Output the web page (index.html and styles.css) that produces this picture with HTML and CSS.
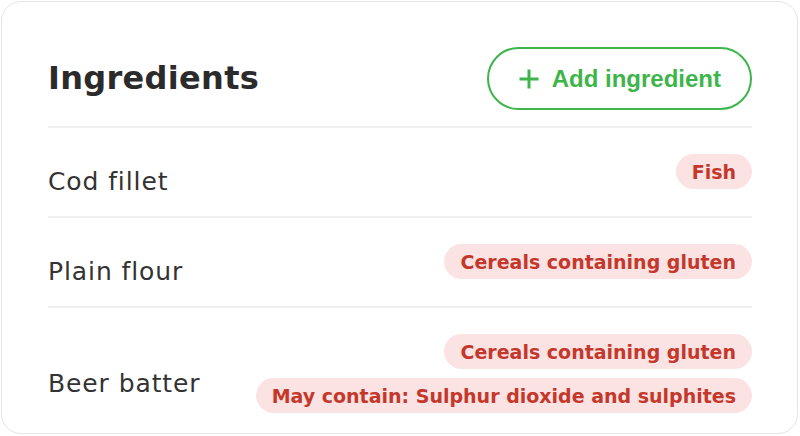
FILE: index.html
```html
<!DOCTYPE html>
<html lang="en">
<head>
<meta charset="utf-8">
<title>Ingredients</title>
<link rel="stylesheet" href="styles.css">
</head>
<body>
<section class="card">
  <header class="card-header">
    <h1 class="title">Ingredients</h1>
    <button class="add-btn" type="button">
      <svg class="plus" width="20" height="20" viewBox="0 0 20 20" aria-hidden="true">
        <path d="M10 0.5V19.5M0.5 10H19.5" stroke="currentColor" stroke-width="3" fill="none"/>
      </svg>
      <span>Add ingredient</span>
    </button>
  </header>
  <ul class="list">
    <li class="row">
      <span class="name">Cod fillet</span>
      <div class="tags"><span class="tag">Fish</span></div>
    </li>
    <li class="row">
      <span class="name">Plain flour</span>
      <div class="tags"><span class="tag">Cereals containing gluten</span></div>
    </li>
    <li class="row row-last">
      <span class="name">Beer batter</span>
      <div class="tags">
        <span class="tag">Cereals containing gluten</span>
        <span class="tag">May contain: Sulphur dioxide and sulphites</span>
      </div>
    </li>
  </ul>
</section>
</body>
</html>
```

FILE: styles.css
```css
html, body {
  margin: 0;
  padding: 0;
  background: #ffffff;
}

body {
  font-family: "DejaVu Sans", "Liberation Sans", sans-serif;
  color: #333333;
}

.card {
  margin: 1px 2px 1px 1px;
  border: 1px solid #e4e4e4;
  border-radius: 20px;
  background: #ffffff;
  padding: 0 45px 0 46px;
}

.card-header {
  display: flex;
  align-items: center;
  justify-content: space-between;
  padding: 45px 0 16px;
  border-bottom: 2px solid #efefef;
}

.title {
  margin: 0;
  font-family: "DejaVu Sans", sans-serif;
  font-weight: 700;
  font-size: 32px;
  letter-spacing: 0.3px;
  color: #2b2b2b;
  line-height: 1.2;
}

.add-btn {
  display: inline-flex;
  align-items: center;
  gap: 13px;
  height: 63px;
  box-sizing: border-box;
  padding: 0 29px 0 30px;
  border: 2px solid #3db54b;
  border-radius: 32px;
  background: #ffffff;
  color: #3db54b;
  font-family: "Liberation Sans", Arial, sans-serif;
  font-weight: 700;
  font-size: 24px;
  cursor: pointer;
}

.plus {
  display: block;
  flex: none;
}

.list {
  list-style: none;
  margin: 0;
  padding: 0;
}

.row {
  display: flex;
  align-items: center;
  justify-content: space-between;
  padding: 26px 0 27px;
  border-bottom: 2px solid #efefef;
}

.row-last {
  border-bottom: none;
  padding-bottom: 20px;
}

.name {
  padding-top: 10px;
  margin-bottom: -10px;
  font-size: 25px;
  letter-spacing: 0.9px;
  color: #333333;
  line-height: 28px;
}

.tags {
  display: flex;
  flex-direction: column;
  align-items: flex-end;
  gap: 9px;
}

.tag {
  display: inline-flex;
  align-items: center;
  height: 35px;
  padding: 0 16px;
  border-radius: 18px;
  background: #fce3e3;
  color: #c4382c;
  font-weight: 700;
  font-size: 19px;
  white-space: nowrap;
}
```
